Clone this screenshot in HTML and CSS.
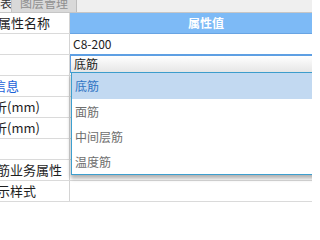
FILE: index.html
```html
<!DOCTYPE html>
<html lang="zh-CN">
<head>
<meta charset="utf-8">
<title>属性</title>
<link rel="stylesheet" href="styles.css">
</head>
<body>
<div class="tabs">
  <div class="tab tab-first">表</div>
  <div class="tab tab-layer">图层管理</div>
</div>
<div class="grid">
  <div class="row head">
    <div class="name"><span class="t off-a">属性名称</span></div>
    <div class="val">属性值</div>
  </div>
  <div class="row">
    <div class="name"></div>
    <div class="val">C8-200</div>
  </div>
  <div class="row edit">
    <div class="name"></div>
    <div class="val">
      <div class="combo">底筋</div>
      <ul class="dropdown">
        <li class="item selected">底筋</li>
        <li class="item">面筋</li>
        <li class="item">中间层筋</li>
        <li class="item">温度筋</li>
      </ul>
    </div>
  </div>
  <div class="row">
    <div class="name group"><span class="t off-b">钢筋信息</span></div>
    <div class="val"></div>
  </div>
  <div class="row">
    <div class="name"><span class="t off-c">左弯折(mm)</span></div>
    <div class="val"></div>
  </div>
  <div class="row">
    <div class="name"><span class="t off-c">右弯折(mm)</span></div>
    <div class="val"></div>
  </div>
  <div class="row">
    <div class="name"></div>
    <div class="val"></div>
  </div>
  <div class="row">
    <div class="name"><span class="t off-d">钢筋业务属性</span></div>
    <div class="val"></div>
  </div>
  <div class="row">
    <div class="name"><span class="t off-e">显示样式</span></div>
    <div class="val"></div>
  </div>
</div>
</body>
</html>
```
FILE: styles.css
```css
* {
  box-sizing: border-box;
  margin: 0;
  padding: 0;
}

html, body {
  width: 312px;
  height: 202px;
  overflow: hidden;
  background: #ffffff;
}

body {
  font-family: "Noto Sans CJK SC", "Noto Sans", sans-serif;
  font-size: 12px;
  color: #222222;
}

.tabs {
  display: flex;
  height: 13px;
  background: #efefef;
  border-bottom: 1px solid #c6c6c6;
  overflow: hidden;
}

.tab {
  height: 12px;
  line-height: 6px;
  font-size: 12px;
  white-space: nowrap;
  overflow: hidden;
}

.tab-first {
  width: 12px;
  background: #f3f3f3;
  border-right: 1px solid #c4c4c4;
  color: #333333;
  text-align: right;
  padding-right: 2px;
}

.tab-layer {
  width: 65px;
  background: #d9d9d9;
  border-right: 1px solid #bcbcbc;
  color: #8f8f8f;
  padding-left: 8px;
}

.grid {
  display: flex;
  flex-direction: column;
}

.row {
  display: flex;
  height: 21px;
  border-bottom: 1px solid #dadada;
}

.name {
  width: 70px;
  flex: none;
  border-right: 1px solid #d4d4d4;
  font-size: 13px;
  line-height: 20px;
  white-space: nowrap;
  overflow: hidden;
  color: #1e1e1e;
}

.name .t {
  display: inline-block;
}

.off-a { margin-left: -2px; }
.off-b { margin-left: -33px; }
.off-c { margin-left: -32px; }
.off-d { margin-left: -16px; }
.off-e { margin-left: -16px; }

.group {
  color: #1b62d8;
}

.val {
  flex: 1;
  position: relative;
  line-height: 20px;
  padding-left: 3px;
  white-space: nowrap;
}

.head .val {
  align-self: flex-start;
  height: 21px;
  background: #7dbaf6;
  border-bottom: 1px solid #68a4e3;
  color: #ffffff;
  font-weight: bold;
  text-align: center;
  padding-left: 30px;
}

.combo {
  margin-top: -1px;
  margin-left: -3px;
  height: 19px;
  border-top: 2px solid #5e9fe3;
  border-left: 1px solid #5e9fe3;
  border-bottom: 1px solid #3d9fcf;
  background: linear-gradient(#ffffff, #e6e6e6);
  padding-left: 3px;
  line-height: 16px;
  color: #222222;
}

.dropdown {
  position: absolute;
  z-index: 5;
  top: 18px;
  left: 1px;
  width: 290px;
  list-style: none;
  background: #ffffff;
  border-left: 1px solid #3d9fcf;
  border-bottom: 1px solid #3d9fcf;
  box-shadow: 0 4px 4px rgba(0, 0, 0, 0.22), -1px 2px 4px rgba(0, 0, 0, 0.12);
}

.item {
  height: 25px;
  line-height: 25px;
  padding-left: 3px;
  color: #6e6e6e;
}

.item.selected {
  height: 26px;
  line-height: 26px;
  background: #c2d9f1;
  color: #2f74c4;
}
```
